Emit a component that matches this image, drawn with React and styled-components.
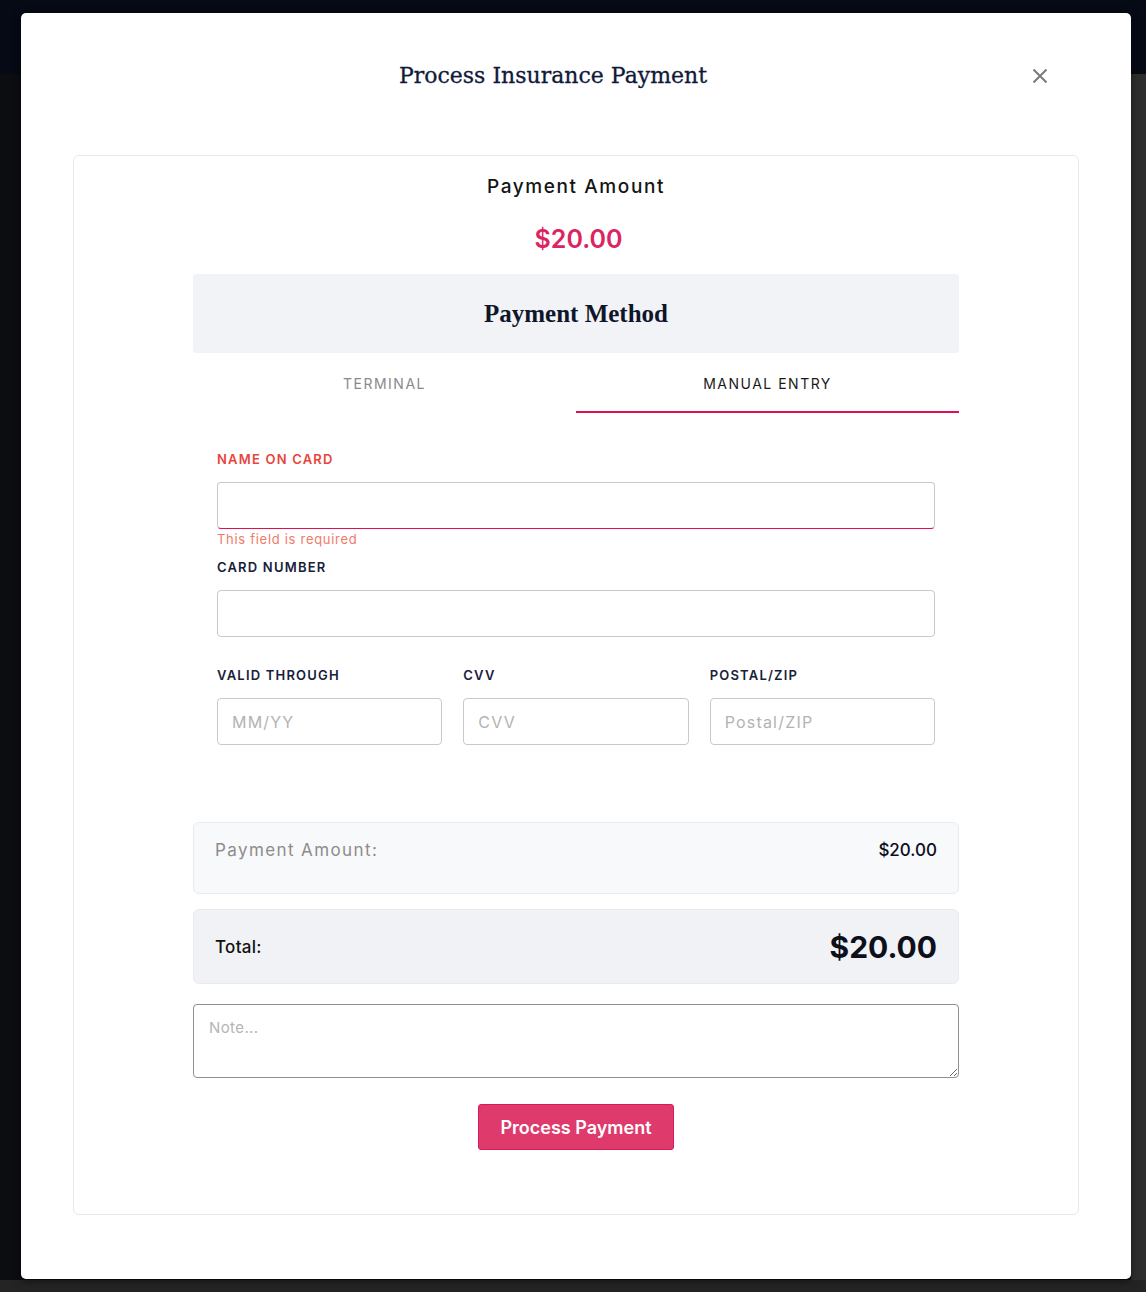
import React from 'react';
import styled, { createGlobalStyle } from 'styled-components';

const GlobalStyle = createGlobalStyle`
  * { box-sizing: border-box; }
  html, body { margin: 0; padding: 0; }
  body {
    font-family: "Inter", "Noto Sans", sans-serif;
    background: #0c0d11;
  }
`;

const Backdrop = styled.div`
  min-height: 1292px;
  padding: 13px 15px 13px 21px;
  background:
    linear-gradient(to bottom, #060a14 0 74px, transparent 74px),
    linear-gradient(to bottom, transparent 0 1280px, #242424 1280px),
    linear-gradient(to right, #0c0d11 0 1131px, #2e2e2e 1131px);
`;

const Modal = styled.div`
  width: 1110px;
  height: 1266px;
  background: #fff;
  border-radius: 5px;
  box-shadow: 0 2px 8px rgba(0, 0, 0, 0.5);
  display: flex;
  flex-direction: column;
`;

const Header = styled.div`
  display: flex;
  align-items: center;
  padding: 40px 79px 0 57px;
  height: 86px;
`;

const Title = styled.h2`
  flex: 1;
  margin: 0;
  text-align: center;
  font-family: "DejaVu Serif", "Liberation Serif", serif;
  font-weight: 400;
  font-size: 22px;
  line-height: 46px;
  color: #10193a;
  -webkit-text-stroke: 0.3px #10193a;
`;

const CloseButton = styled.button`
  width: 24px;
  height: 24px;
  padding: 0;
  border: none;
  background: none;
  display: flex;
  align-items: center;
  justify-content: center;
  cursor: pointer;
`;

const Body = styled.div`
  padding: 56px 52px 0 52px;
`;

const Card = styled.div`
  height: 1060px;
  border: 1px solid #e4e9f1;
  border-radius: 6px;
  padding: 19px 119px 0 119px;
  display: flex;
  flex-direction: column;
  align-items: stretch;
`;

const AmountLabel = styled.div`
  text-align: center;
  font-size: 19px;
  line-height: 24px;
  font-weight: 500;
  color: #141414;
  letter-spacing: 1.6px;
`;

const AmountValue = styled.div`
  text-align: center;
  margin-top: 24px;
  padding-left: 5px;
  font-size: 25px;
  line-height: 32px;
  font-weight: 600;
  color: #dc2462;
`;

const MethodBox = styled.div`
  margin-top: 19px;
  height: 79px;
  background: #f1f3f7;
  border-radius: 3px;
  display: flex;
  align-items: center;
  justify-content: center;
  font-family: "Liberation Serif", "DejaVu Serif", serif;
  font-weight: 700;
  font-size: 25px;
  color: #10162a;
`;

const Tabs = styled.div`
  display: grid;
  grid-template-columns: 1fr 1fr;
`;

const Tab = styled.div`
  height: 60px;
  display: flex;
  align-items: center;
  justify-content: center;
  padding-top: 3px;
  font-size: 14px;
  letter-spacing: 1.5px;
  color: ${({ $active }) => ($active ? '#1a1a1a' : '#8a8a8a')};
  border-bottom: 2px solid ${({ $active }) => ($active ? '#e0104f' : 'transparent')};
`;

const Form = styled.div`
  padding: 38px 24px 0 24px;
`;

const Field = styled.div`
  display: flex;
  flex-direction: column;
  margin-bottom: ${({ $mb }) => $mb || 0}px;
`;

const Label = styled.label`
  font-size: 13px;
  line-height: 16px;
  font-weight: 600;
  letter-spacing: 1.2px;
  color: ${({ $error }) => ($error ? '#e8453c' : '#17203a')};
  margin-bottom: 15px;
`;

const Input = styled.input`
  height: 47px;
  width: 100%;
  border: 1px solid #c9c9c9;
  border-bottom: 1px solid ${({ $error }) => ($error ? '#e0104f' : '#c9c9c9')};
  border-radius: 4px;
  padding: 0 14px;
  font-family: inherit;
  font-size: 16px;
  letter-spacing: 1.2px;
  color: #222;
  outline: none;
  &::placeholder {
    color: #b3b3b3;
  }
`;

const ErrorText = styled.div`
  margin-top: 2px;
  font-size: 13px;
  line-height: 16px;
  letter-spacing: 0.7px;
  color: #f07a6a;
`;

const Row = styled.div`
  display: grid;
  grid-template-columns: repeat(3, 1fr);
  gap: 21px;
`;

const SummaryBox = styled.div`
  margin-top: ${({ $mt }) => $mt}px;
  height: ${({ $h }) => $h}px;
  background: ${({ $total }) => ($total ? '#f0f2f5' : '#f8f9fb')};
  border: 1px solid #e8ebf0;
  border-radius: 6px;
  padding: ${({ $total }) => ($total ? '0 21px' : '16px 21px 0 21px')};
  display: flex;
  justify-content: space-between;
  align-items: ${({ $total }) => ($total ? 'center' : 'flex-start')};
`;

const SummaryLabel = styled.span`
  font-size: 17px;
  line-height: 22px;
  letter-spacing: ${({ $total }) => ($total ? 0.3 : 1.4)}px;
  color: ${({ $total }) => ($total ? '#111' : '#8c8c8c')};
  font-weight: ${({ $total }) => ($total ? 500 : 400)};
`;

const SummaryValue = styled.span`
  font-size: ${({ $total }) => ($total ? 30 : 17)}px;
  line-height: 22px;
  font-weight: ${({ $total }) => ($total ? 700 : 500)};
  color: #0d0f1a;
`;

const Note = styled.textarea`
  margin-top: 20px;
  height: 74px;
  width: 100%;
  border: 1px solid #8f8f8f;
  border-radius: 4px;
  padding: 13px 15px;
  font-family: inherit;
  font-size: 15px;
  letter-spacing: 0.4px;
  outline: none;
  &::placeholder {
    color: #b5b5b5;
  }
`;

const Actions = styled.div`
  display: flex;
  justify-content: center;
  margin-top: 26px;
`;

const SubmitButton = styled.button`
  width: 196px;
  height: 46px;
  border: 1px solid #d81b56;
  border-radius: 3px;
  background: #de3a6c;
  color: #fff;
  font-family: inherit;
  font-size: 18px;
  font-weight: 600;
  cursor: pointer;
`;

export default function App() {
  return (
    <>
      <GlobalStyle />
      <Backdrop>
        <Modal>
          <Header>
            <Title>Process Insurance Payment</Title>
            <CloseButton aria-label="Close">
              <svg width="16" height="16" viewBox="0 0 16 16">
                <path d="M1.5 1.5 L14.5 14.5 M14.5 1.5 L1.5 14.5" stroke="#7a7a7a" strokeWidth="2" />
              </svg>
            </CloseButton>
          </Header>
          <Body>
            <Card>
              <AmountLabel>Payment Amount</AmountLabel>
              <AmountValue>$20.00</AmountValue>
              <MethodBox>Payment Method</MethodBox>
              <Tabs>
                <Tab>TERMINAL</Tab>
                <Tab $active>MANUAL ENTRY</Tab>
              </Tabs>
              <Form>
                <Field $mb={12}>
                  <Label $error>NAME ON CARD</Label>
                  <Input $error />
                  <ErrorText>This field is required</ErrorText>
                </Field>
                <Field $mb={30}>
                  <Label>CARD NUMBER</Label>
                  <Input />
                </Field>
                <Row>
                  <Field>
                    <Label>VALID THROUGH</Label>
                    <Input placeholder="MM/YY" />
                  </Field>
                  <Field>
                    <Label>CVV</Label>
                    <Input placeholder="CVV" />
                  </Field>
                  <Field>
                    <Label>POSTAL/ZIP</Label>
                    <Input placeholder="Postal/ZIP" />
                  </Field>
                </Row>
              </Form>
              <SummaryBox $mt={77} $h={72}>
                <SummaryLabel>Payment Amount:</SummaryLabel>
                <SummaryValue>$20.00</SummaryValue>
              </SummaryBox>
              <SummaryBox $mt={15} $h={75} $total>
                <SummaryLabel $total>Total:</SummaryLabel>
                <SummaryValue $total>$20.00</SummaryValue>
              </SummaryBox>
              <Note placeholder="Note..." />
              <Actions>
                <SubmitButton>Process Payment</SubmitButton>
              </Actions>
            </Card>
          </Body>
        </Modal>
      </Backdrop>
    </>
  );
}
